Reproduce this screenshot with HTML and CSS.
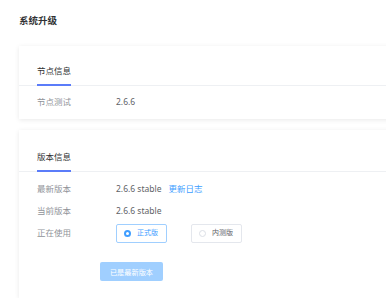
FILE: index.html
```html
<!DOCTYPE html>
<html lang="zh-CN">
<head>
  <meta charset="UTF-8">
  <meta name="viewport" content="width=device-width, initial-scale=1.0">
  <title>系统升级</title>
  <link rel="stylesheet" href="styles.css">
</head>
<body>
  <main class="page">
    <h1 class="page-title">系统升级</h1>

    <!-- 节点信息 -->
    <section class="card">
      <div class="tabs">
        <span class="tab active">节点信息</span>
      </div>
      <div class="card-body">
        <div class="row">
          <span class="label">节点测试</span>
          <span class="value">2.6.6</span>
        </div>
      </div>
    </section>

    <!-- 版本信息 -->
    <section class="card">
      <div class="tabs">
        <span class="tab active">版本信息</span>
      </div>
      <div class="card-body">
        <div class="row">
          <span class="label">最新版本</span>
          <span class="value">2.6.6 stable</span>
          <a href="#" class="link">更新日志</a>
        </div>
        <div class="row">
          <span class="label">当前版本</span>
          <span class="value">2.6.6 stable</span>
        </div>
        <div class="row">
          <span class="label">正在使用</span>
          <div class="radio-group">
            <label class="radio checked"><span class="radio-dot"></span>正式版</label>
            <label class="radio"><span class="radio-dot"></span>内测版</label>
          </div>
        </div>
        <button class="btn" disabled>已是最新版本</button>
      </div>
    </section>
  </main>
</body>
</html>
```

FILE: styles.css
```css
* {
  box-sizing: border-box;
  margin: 0;
  padding: 0;
}
html, body {
  overflow: hidden;
}
body {
  font-family: "Noto Sans", "Noto Sans CJK SC", sans-serif;
  background-color: #fff;
  color: #303133;
}
.page {
  width: 420px;
  padding: 14px 0 0 19px;
}
.page-title {
  font-size: 9.5px;
  font-weight: bold;
  line-height: 14px;
  color: #303133;
}
/* Cartes */
.card {
  background-color: #fff;
  box-shadow: 0 1px 5px rgba(0,0,0,0.09);
  margin-top: 18px;
}
.card + .card {
  margin-top: 11px;
}
.tabs {
  display: flex;
  border-bottom: 1px solid #eef0f3;
  padding: 18px 0 0 18px;
}
.card + .card .tabs {
  padding-top: 20px;
}
.tab {
  display: block;
  font-size: 8.5px;
  line-height: 14px;
  padding-bottom: 6px;
  color: #303133;
}
.tab.active {
  border-bottom: 2px solid #5b7cf9;
  margin-bottom: -1px;
}
.card-body {
  padding: 5px 0 6px 18px;
}
.card + .card .card-body {
  padding: 6px 0 17px 18px;
}
.row {
  display: flex;
  align-items: center;
  height: 22px;
  font-size: 8.5px;
  line-height: 14px;
}
.label {
  width: 79px;
  color: #909399;
}
.value {
  color: #606266;
}
.link {
  color: #409eff;
  text-decoration: none;
  margin-left: 7px;
}
/* Boutons radio */
.radio-group {
  display: flex;
  gap: 24px;
}
.radio {
  display: flex;
  align-items: center;
  width: 51px;
  height: 19px;
  padding-left: 7px;
  border: 1px solid #e4e7ed;
  border-radius: 2px;
  font-size: 7px;
  color: #606266;
}
.radio-dot {
  width: 7px;
  height: 7px;
  border: 1px solid #dcdfe6;
  border-radius: 50%;
  margin-right: 6px;
}
.radio.checked {
  border-color: #a0cfff;
  color: #409eff;
}
.radio.checked .radio-dot {
  border: 2.5px solid #409eff;
  background-color: #fff;
}
.btn {
  display: block;
  margin: 18px 0 0 63px;
  width: 63px;
  height: 19px;
  border: none;
  border-radius: 2px;
  background-color: #a0cfff;
  color: #fff;
  font-family: inherit;
  font-size: 7.2px;
}
```
